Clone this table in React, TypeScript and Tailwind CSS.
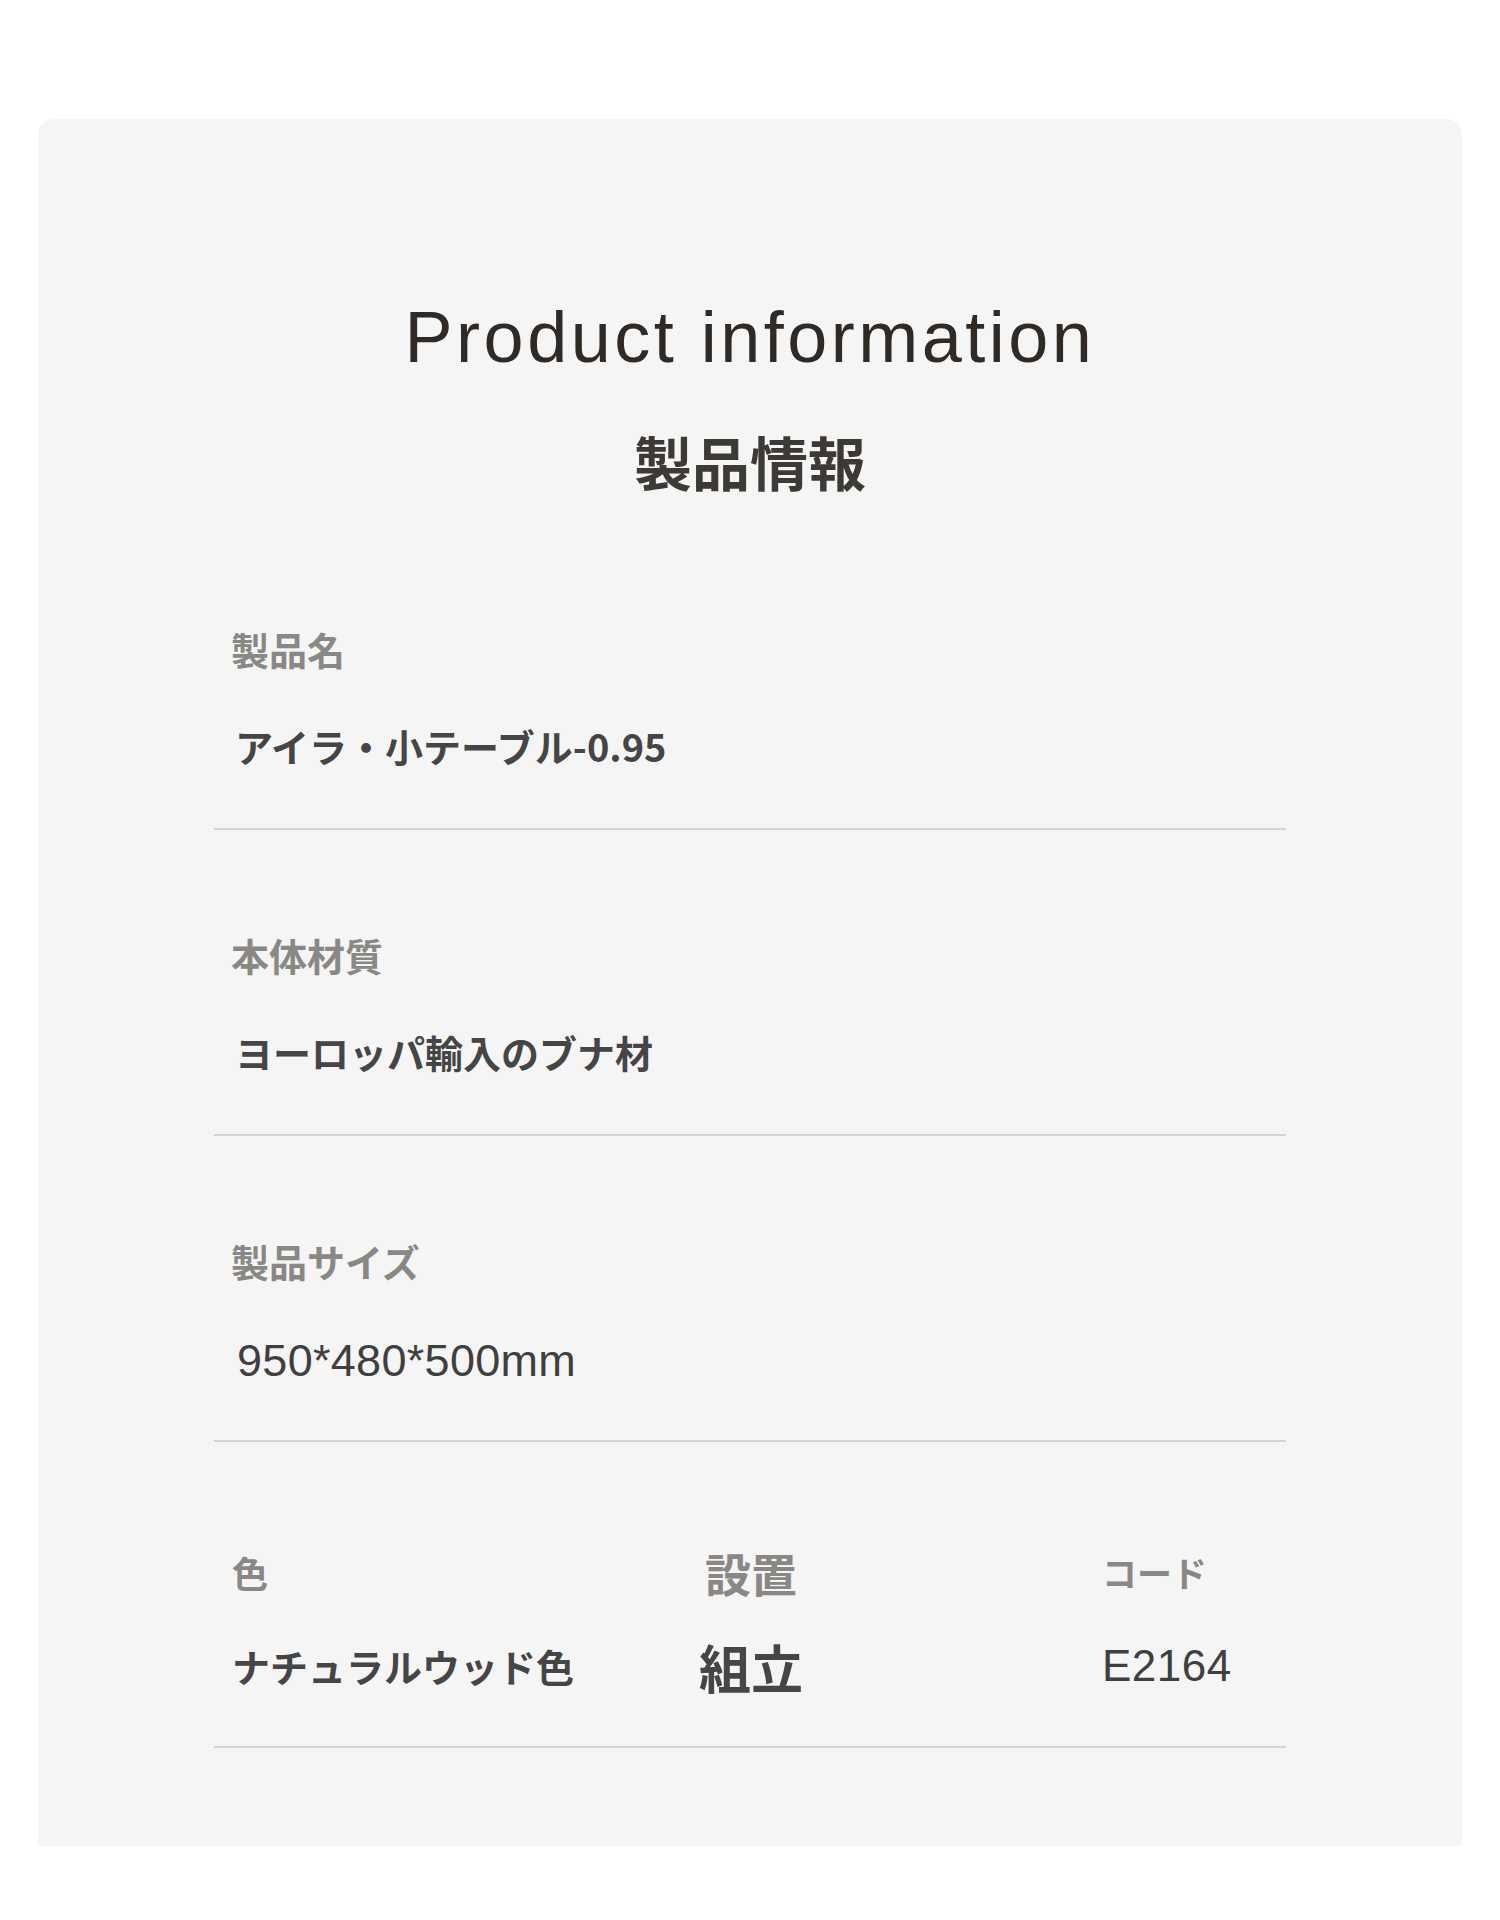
const jp = "font-['Noto_Sans_CJK_JP','Noto_Sans',sans-serif]";
const lat = "font-['Liberation_Sans',Arial,sans-serif]";

function Row({ label, value, valueLatin }: { label: string; value: string; valueLatin?: boolean }) {
  return (
    <div className="flex h-[306px] flex-col border-b-2 border-[#d4d4d4]">
      <div className={`${jp} mt-[107px] h-[36px] pl-[17px] text-[38px] font-bold leading-[36px] text-[#8a8885]`}>
        {label}
      </div>
      {valueLatin ? (
        <div className={`${lat} mt-[64px] h-[36px] pl-[23px] text-[45px] leading-[36px] tracking-[0.3px] text-[#3f3f3f]`}>
          {value}
        </div>
      ) : (
        <div className={`${jp} mt-[61px] h-[36px] pl-[21px] text-[38px] font-bold leading-[36px] text-[#454545]`}>
          {value}
        </div>
      )}
    </div>
  );
}

export default function App() {
  return (
    <div className="min-h-[1920px] w-[1500px] bg-white pt-[119px]">
      <div className="ml-[38px] h-[1727px] w-[1424px] rounded-t-[16px] bg-[#f5f5f5]">
        <div className="flex h-[405px] flex-col items-center">
          <div
            className={`${lat} mt-[182px] h-[72px] text-[72px] leading-none tracking-[3.5px] text-[#2f2a26]`}
          >
            Product information
          </div>
          <div
            className={`${jp} mt-[59px] h-[58px] text-[58px] font-bold leading-none text-[#3d3935]`}
          >
            製品情報
          </div>
        </div>

        <div className="ml-[176px] w-[1072px]">
          <Row label="製品名" value="アイラ・小テーブル-0.95" />
          <Row label="本体材質" value="ヨーロッパ輸入のブナ材" />
          <Row label="製品サイズ" value="950*480*500mm" valueLatin />

          <div className="flex h-[306px] border-b-2 border-[#d4d4d4]">
            <div className="flex w-[457px] flex-col pl-[18px]">
              <div className={`${jp} mt-[112px] h-[36px] text-[36px] font-bold leading-[36px] text-[#8a8885]`}>
                色
              </div>
              <div className={`${jp} mt-[58px] h-[36px] whitespace-nowrap text-[38px] font-bold leading-[36px] text-[#454545]`}>
                ナチュラルウッド色
              </div>
            </div>
            <div className="flex w-[160px] flex-col items-center">
              <div className={`${jp} mt-[112px] h-[36px] whitespace-nowrap text-[46px] font-bold leading-[36px] text-[#8a8885]`}>
                設置
              </div>
              <div className={`${jp} mt-[56px] h-[42px] whitespace-nowrap text-[52px] font-bold leading-[42px] text-[#464646]`}>
                組立
              </div>
            </div>
            <div className="flex flex-col pl-[271px]">
              <div className={`${jp} mt-[112px] h-[36px] whitespace-nowrap text-[35px] font-bold leading-[36px] text-[#8a8885]`}>
                コード
              </div>
              <div className={`${lat} mt-[58px] h-[36px] text-[44px] leading-[36px] tracking-[0.5px] text-[#3f3f3f]`}>
                E2164
              </div>
            </div>
          </div>
        </div>
      </div>
    </div>
  );
}
